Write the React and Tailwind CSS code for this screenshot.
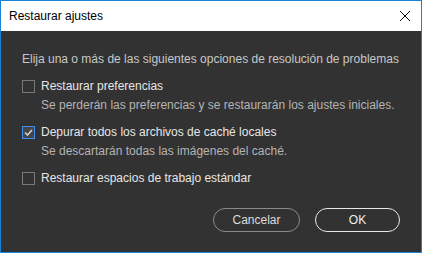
function CheckRow({ checked, label, hint }) {
  return (
    <div className="flex flex-col">
      <div className="flex h-[16px] items-center">
        <span
          className={
            checked
              ? 'flex h-[13px] w-[13px] items-center justify-center border border-[#3c8ef0] bg-[#454545]'
              : 'h-[13px] w-[13px] border border-[#7a7a7a] bg-[#323232]'
          }
        >
          {checked && (
            <svg width="9" height="7" viewBox="0 0 9 7">
              <path d="M1 3.5 L3.5 6 L8 1" fill="none" stroke="#d0d0d0" strokeWidth="1.6" />
            </svg>
          )}
        </span>
        <span className="ml-[6px] text-[#e6e6e6]">{label}</span>
      </div>
      {hint && <p className="ml-[19px] mt-[3px] h-[16px] text-[#b4b4b4]">{hint}</p>}
    </div>
  );
}

export default function App() {
  return (
    <div
      className="flex h-[253px] w-[422px] flex-col whitespace-nowrap border border-[#1883d7] text-[12px] leading-[16px]"
      style={{ fontFamily: '"Liberation Sans", sans-serif' }}
    >
      <div className="flex h-[30px] items-center justify-between bg-white pl-[8px] pr-[8px]">
        <span className="text-[12px] text-black">Restaurar ajustes</span>
        <svg width="12" height="12" viewBox="0 0 12 12" className="mr-[2px]">
          <path d="M1 1 L11 11 M11 1 L1 11" stroke="#111" strokeWidth="1" />
        </svg>
      </div>
      <div className="flex flex-1 flex-col bg-[#323232] pl-[21px] pr-[21px] pt-[20px]">
        <p className="text-[#c8c8c8]">Elija una o más de las siguientes opciones de resolución de problemas</p>
        <div className="mt-[11px] flex flex-col gap-[11px]">
          <CheckRow
            label="Restaurar preferencias"
            hint="Se perderán las preferencias y se restaurarán los ajustes iniciales."
          />
          <CheckRow
            checked
            label="Depurar todos los archivos de caché locales"
            hint="Se descartarán todas las imágenes del caché."
          />
          <CheckRow label="Restaurar espacios de trabajo estándar" />
        </div>
        <div className="mt-auto mb-[20px] flex justify-end gap-[15px]">
          <button className="h-[24px] w-[87px] rounded-full border border-[#8a8a8a] text-[#dcdcdc]">Cancelar</button>
          <button className="h-[24px] w-[85px] rounded-full border-[1.5px] border-[#e8e8e8] text-[#f0f0f0]">OK</button>
        </div>
      </div>
    </div>
  );
}
